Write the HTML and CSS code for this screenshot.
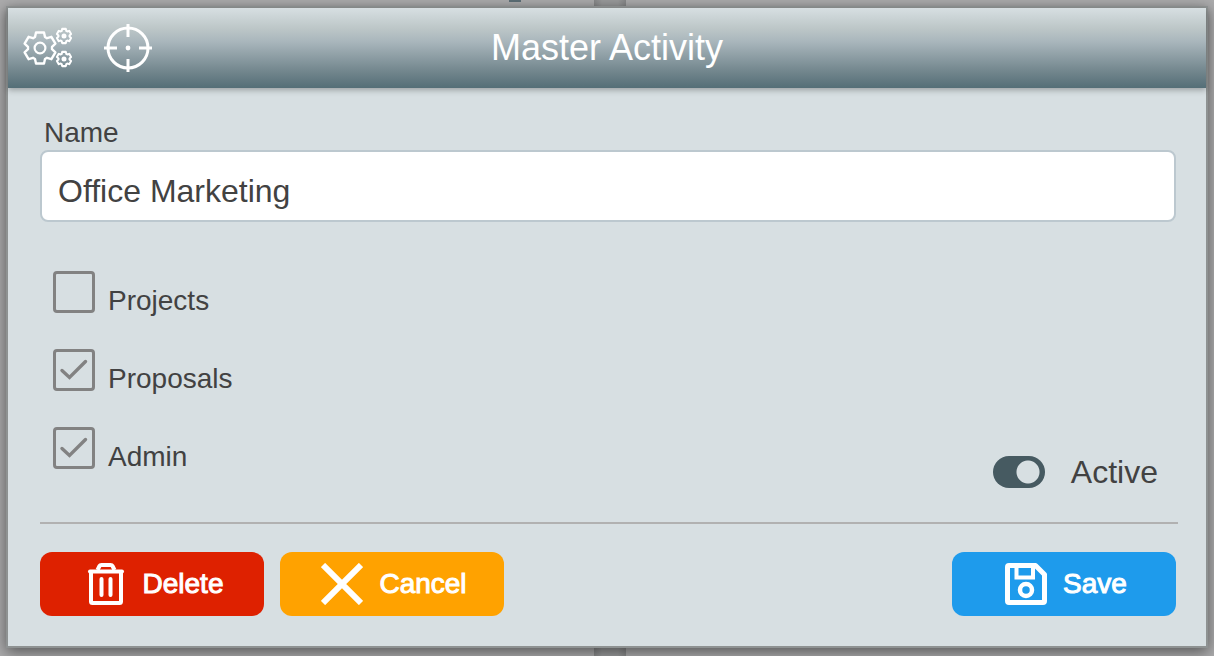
FILE: index.html
```html
<!DOCTYPE html>
<html lang="en">
<head>
  <meta charset="UTF-8">
  <title>Master Activity</title>
  <link rel="stylesheet" href="styles.css">
</head>
<body>

  <main class="dialog">
    <header class="dialog-header">
      <div class="tools">
        <button type="button" class="tool" aria-label="Settings">
          <svg width="50" height="50" viewBox="0 0 50 50" stroke-linejoin="round">
            <defs>
              <path id="gear" d="M-5 -11L-4 -15.500H4L5 -11L7 -9.800L11.400 -11.200L15.400 -4.300L12 -1.200V1.200L15.400 4.300L11.400 11.200L7 9.800L5 11L4 15.500H-4L-5 11L-7 9.800L-11.400 11.200L-15.400 4.300L-12 1.200V-1.200L-15.400 -4.300L-11.400 -11.200L-7 -9.800Z"/>
            </defs>
            <use href="#gear" transform="translate(17 25)" stroke-width="2.400"/>
            <circle cx="17" cy="25" r="5.400" stroke-width="2.200"/>
            <use href="#gear" transform="translate(41 13) scale(.46)" stroke-width="4.400"/>
            <circle class="dot" cx="41" cy="13" r="2.500"/>
            <use href="#gear" transform="translate(41 36) scale(.46)" stroke-width="4.400"/>
            <circle class="dot" cx="41" cy="36" r="2.500"/>
          </svg>
        </button>
        <button type="button" class="tool" aria-label="Target">
          <svg width="50" height="50" viewBox="0 0 50 50">
            <circle cx="25" cy="25" r="20" stroke-width="3"/>
            <path d="M25 1V14M25 36V49M1 25H14M36 25H49" stroke-width="3"/>
            <circle class="dot" cx="25" cy="25" r="2.400"/>
          </svg>
        </button>
      </div>
      <h1>Master Activity</h1>
    </header>

    <form class="dialog-body">
      <label class="name-label" for="name">Name</label>
      <input class="name-input" type="text" id="name" value="Office Marketing">

      <div class="options">
        <div class="checks">
          <div class="check">
            <input type="checkbox" id="projects">
            <label for="projects">Projects</label>
          </div>
          <div class="check">
            <input type="checkbox" id="proposals" checked>
            <label for="proposals">Proposals</label>
          </div>
          <div class="check">
            <input type="checkbox" id="admin" checked>
            <label for="admin">Admin</label>
          </div>
        </div>
        <div class="active">
          <input type="checkbox" role="switch" id="active" checked>
          <label for="active">Active</label>
        </div>
      </div>

      <hr>

      <div class="actions">
        <button type="button" class="btn delete">
          <svg width="42" height="42" viewBox="0 0 42 42">
            <path d="M6 9V38.500Q6 40 7.500 40H34.500Q36 40 36 38.500V9" stroke-width="4"/>
            <path d="M5 8.500H37" stroke-width="4" stroke-linecap="round"/>
            <path d="M12.500 7L14.500 3Q15 2 16.500 2H25.500Q27 2 27.500 3L29.500 7" stroke-width="4"/>
            <path d="M16.500 16V32M25.500 16V32" stroke-width="4" stroke-linecap="round"/>
          </svg>
          Delete
        </button>
        <button type="button" class="btn cancel">
          <svg width="42" height="42" viewBox="0 0 42 42">
            <path d="M2 2L40 40M40 2L2 40" stroke-width="6"/>
          </svg>
          Cancel
        </button>
        <button type="submit" class="btn save">
          <svg width="42" height="42" viewBox="0 0 42 42">
            <path d="M4 2.500H30.500L39.500 11.500V38Q39.500 39.500 38 39.500H4Q2.500 39.500 2.500 38V4Q2.500 2.500 4 2.500Z" stroke-width="5" stroke-linejoin="round"/>
            <path d="M11.500 3V14.500H28V3" stroke-width="4"/>
            <circle cx="21" cy="27" r="6" stroke-width="4.500"/>
          </svg>
          Save
        </button>
      </div>
    </form>
  </main>

</body>
</html>
```

FILE: styles.css
```css
* {
  box-sizing: border-box;
}

body {
  margin: 0;
  padding: 6px;
  min-height: 100vh;
  font-family: "Liberation Sans", Arial, sans-serif;
  color: #424242;
  background:
    linear-gradient(#5d6f77, #5d6f77) calc(50% - 92px) 0 / 12px 2px no-repeat,
    linear-gradient(90deg, #878889, #9a9b9c 8px, #9a9b9c 24px, #878889) calc(50% + 3px) 0 / 32px 100% no-repeat,
    #acacad;
}

.dialog {
  border: 2px solid #8e9292;
  background: #d7dfe2;
  box-shadow: 0 4px 14px rgba(0, 0, 0, 0.5);
}

.dialog-header {
  display: grid;
  grid-template-columns: 1fr auto 1fr;
  align-items: center;
  height: 80px;
  padding: 0 15px;
  background: linear-gradient(#d7dfe2, #bdc7c8 25%, #a9b6bc 42%, #71858c 80%, #546e77);
  box-shadow: 0 2px 6px rgba(0, 0, 0, 0.3);
}

.tools {
  display: flex;
  gap: 30px;
}

.tool {
  padding: 0;
  border: none;
  background: none;
  cursor: pointer;
}

svg {
  display: block;
  fill: none;
  stroke: white;
}

.dot {
  fill: white;
  stroke: none;
}

h1 {
  margin: 0;
  font-size: 36px;
  font-weight: normal;
  color: white;
}

.dialog-body {
  padding: 28px 30px 30px 32px;
}

.name-label {
  display: block;
  padding-left: 4px;
  font-size: 28px;
  line-height: 34px;
}

.name-input {
  display: block;
  width: 100%;
  height: 72px;
  padding: 10px 16px 0;
  border: 2px solid #bcc8cf;
  border-radius: 8px;
  font: 32px "Liberation Sans", Arial, sans-serif;
  color: inherit;
  background: white;
}

.options {
  display: flex;
  justify-content: space-between;
  align-items: flex-end;
  padding: 49px 18px 32px 13px;
}

.checks {
  display: grid;
  gap: 36px;
  padding-bottom: 21px;
}

.check {
  display: flex;
  gap: 13px;
  height: 42px;
}

.check label {
  padding-top: 14px;
  font-size: 28px;
  line-height: 32px;
}

.check input {
  appearance: none;
  width: 42px;
  height: 42px;
  margin: 0;
  border: 3px solid #828282;
  border-radius: 4px;
}

.check input:checked {
  background: url("data:image/svg+xml,%3Csvg xmlns='http://www.w3.org/2000/svg' viewBox='0 0 36 36'%3E%3Cpath d='M6 18.500L13.500 25.500L29.500 9.500' fill='none' stroke='%23828282' stroke-width='3.400' stroke-linecap='round'/%3E%3C/svg%3E") center / 36px 36px no-repeat;
}

.active {
  display: flex;
  align-items: center;
  gap: 26px;
  font-size: 32px;
  line-height: 36px;
}

.active input {
  appearance: none;
  width: 52px;
  height: 32px;
  margin: 0;
  border-radius: 16px;
  background: radial-gradient(circle at 17px 16px, #d7dfe2 11px, #465a61 12px);
}

.active input:checked {
  background: radial-gradient(circle at 35px 16px, #d7dfe2 11px, #465a61 12px);
}

hr {
  height: 2px;
  margin: 0 -2px 28px 0;
  border: none;
  background: #b1b1b1;
}

.actions {
  display: flex;
  gap: 16px;
}

.btn {
  display: flex;
  align-items: center;
  justify-content: center;
  gap: 16px;
  width: 224px;
  height: 64px;
  padding: 0 4px 0 8px;
  border: none;
  border-radius: 12px;
  font: 28px "Liberation Sans", Arial, sans-serif;
  -webkit-text-stroke: 1px white;
  color: white;
  cursor: pointer;
}

.delete {
  background: #de2100;
}

.cancel {
  background: #ffa200;
}

.save {
  margin-left: auto;
  background: #1e9bec;
}
```
